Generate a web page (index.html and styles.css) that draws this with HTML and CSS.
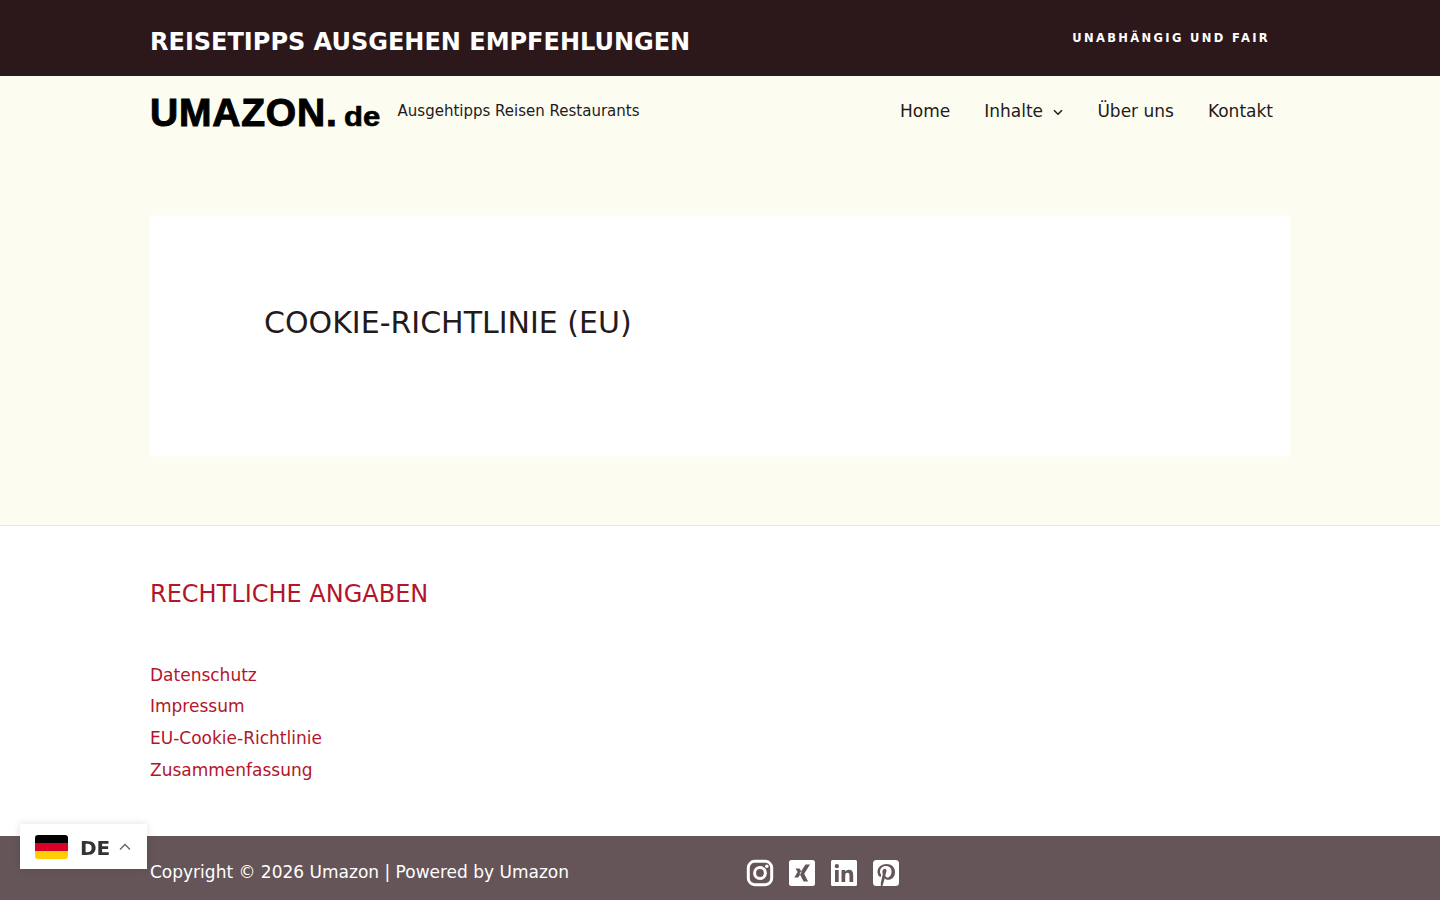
FILE: index.html
```html
<!DOCTYPE html>
<html lang="de">
<head>
    <meta charset="UTF-8">
    <meta name="viewport" content="width=device-width, initial-scale=1.0">
    <title>Cookie-Richtlinie (EU) - Umazon</title>
    <link rel="stylesheet" href="styles.css">
</head>
<body>
    <div class="topbar">
        <div class="container topbar-inner">
            <div class="topbar-title">REISETIPPS AUSGEHEN EMPFEHLUNGEN</div>
            <div class="topbar-note">UNABHÄNGIG UND FAIR</div>
        </div>
    </div>

    <div class="main-area">
        <header class="container nav">
            <div class="brand">
                <a class="logo" href="#">UMAZON.<span>de</span></a>
                <span class="tagline">Ausgehtipps Reisen Restaurants</span>
            </div>
            <nav class="menu">
                <a href="#">Home</a>
                <a href="#">Inhalte
                    <svg class="menu-arrow" viewBox="0 0 12 12" width="12" height="12"><path d="M2 4.2 6 8.2 10 4.2" fill="none" stroke="currentColor" stroke-width="1.5"/></svg>
                </a>
                <a href="#">Über uns</a>
                <a href="#">Kontakt</a>
            </nav>
        </header>

        <div class="container">
            <div class="card">
                <h1>COOKIE-RICHTLINIE (EU)</h1>
            </div>
        </div>
    </div>

    <div class="footer-widgets">
        <div class="container">
            <h2>RECHTLICHE ANGABEN</h2>
            <ul class="legal-links">
                <li><a href="#">Datenschutz</a></li>
                <li><a href="#">Impressum</a></li>
                <li><a href="#">EU-Cookie-Richtlinie</a></li>
                <li><a href="#">Zusammenfassung</a></li>
            </ul>
        </div>
    </div>

    <footer class="bottom-bar">
        <div class="container bottom-inner">
            <div class="copyright">Copyright © 2026 Umazon | Powered by Umazon</div>
            <div class="social">
                <a href="#" aria-label="Instagram">
                    <svg viewBox="0 0 28 28" width="28" height="28"><rect x="2.300" y="2.300" width="23.400" height="23.400" rx="6.500" fill="none" stroke="#fff" stroke-width="3"/><circle cx="14" cy="14" r="5.400" fill="none" stroke="#fff" stroke-width="3"/><circle cx="20.800" cy="7.200" r="1.700" fill="#fff"/></svg>
                </a>
                <a href="#" aria-label="Xing">
                    <svg viewBox="0 0 28 28" width="28" height="28"><path fill="#fff" fill-rule="evenodd" d="M3.500 1h21A2.500 2.500 0 0 1 27 3.500v21a2.500 2.500 0 0 1-2.500 2.500h-21A2.500 2.500 0 0 1 1 24.500v-21A2.500 2.500 0 0 1 3.500 1ZM17.500 5.500h4.500l-5.800 9.200 3.900 7.800h-4.500l-4-7.800ZM7.500 9.500h4l2.100 3.500-3.300 5.500H6.300l3.300-5.500Z"/></svg>
                </a>
                <a href="#" aria-label="LinkedIn">
                    <svg viewBox="0 0 28 28" width="28" height="28"><path fill="#fff" fill-rule="evenodd" d="M2.500 1h23A1.500 1.500 0 0 1 27 2.500v23a1.500 1.500 0 0 1-1.500 1.500h-23A1.500 1.500 0 0 1 1 25.500v-23A1.500 1.500 0 0 1 2.500 1ZM5 11v12h3.700V11ZM6.850 5A2.150 2.150 0 1 0 6.850 9.300 2.150 2.150 0 1 0 6.850 5ZM11.500 11v12h3.700v-6.200c0-1.900.7-3.100 2.300-3.100 1.500 0 2 1.100 2 3V23h3.700v-7c0-3.500-1.500-5.300-4.300-5.300-1.700 0-3 .8-3.700 2V11Z"/></svg>
                </a>
                <a href="#" aria-label="Pinterest">
                    <svg viewBox="0 0 28 28" width="28" height="28"><path fill="#fff" fill-rule="evenodd" d="M4.500 1h19A3.500 3.500 0 0 1 27 4.500v19a3.500 3.500 0 0 1-3.500 3.500h-13l2.300-7.800c.6.900 1.900 1.600 3.300 1.600 4 0 6.900-3.400 6.900-7.900C23 8.500 19.500 5 14.500 5 8.700 5 5.500 8.800 5.500 12.900c0 2 1 4.300 2.700 5 .3.100.4.100.5-.2l.4-1.700c0-.2 0-.3-.1-.5-.6-.7-1-1.700-1-2.700 0-3 2.300-5.700 6-5.700 3.300 0 5.500 2.200 5.500 5.300 0 3.500-1.700 6-4.100 6-1.300 0-2.300-1.100-2-2.400.4-1.600 1.100-3.300 1.100-4.400 0-1-.5-1.900-1.700-1.900-1.300 0-2.400 1.400-2.400 3.200 0 1.200.4 2 .4 2L9 23c-.3 1.100-.2 2.800-.1 4H4.500A3.500 3.500 0 0 1 1 23.500v-19A3.500 3.500 0 0 1 4.500 1Z"/></svg>
                </a>
            </div>
        </div>
    </footer>

    <div class="lang-switch">
        <svg class="flag" viewBox="0 0 33 24" width="33" height="24"><clipPath id="flagClip"><rect width="33" height="24" rx="3"/></clipPath><g clip-path="url(#flagClip)"><rect width="33" height="8" fill="#000"/><rect y="8" width="33" height="8" fill="#d80027"/><rect y="16" width="33" height="8" fill="#ffcd05"/></g></svg>
        <span class="lang-code">DE</span>
        <svg class="lang-arrow" viewBox="0 0 12 8" width="12" height="8"><path d="M1 6.500 6 1.500 11 6.500" fill="none" stroke="#666" stroke-width="1.400"/></svg>
    </div>
</body>
</html>
```

FILE: styles.css
```css
:root {
    --dark: #2c171b;
    --cream: #fcfcf0;
    --red: #b3152a;
    --text: #231a1c;
    --footer: #655558;
}

* {
    margin: 0;
    padding: 0;
    box-sizing: border-box;
}

html, body {
    height: 900px;
    overflow: hidden;
}

body {
    background: white;
    color: var(--text);
    font-family: "DejaVu Sans", sans-serif;
}

a {
    color: inherit;
    text-decoration: none;
}

.container {
    width: 1140px;
    margin: 0 auto;
}

.topbar {
    background: var(--dark);
    color: white;
    height: 76px;
}

.topbar-inner {
    display: flex;
    justify-content: space-between;
    padding-right: 20px;
}

.topbar-title {
    font-size: 24px;
    font-weight: bold;
    line-height: 30px;
    padding-top: 27px;
}

.topbar-note {
    font-size: 11.5px;
    font-weight: bold;
    letter-spacing: 2.35px;
    line-height: 16px;
    padding-top: 30px;
}

.main-area {
    background: var(--cream);
    height: 450px;
    border-bottom: 1px solid #e6e6e2;
}

.nav {
    display: flex;
    justify-content: space-between;
    align-items: center;
    height: 70px;
    padding-right: 17px;
}

.brand {
    display: flex;
    align-items: center;
    gap: 17px;
}

.logo {
    font-family: "Liberation Sans", Arial, sans-serif;
    font-weight: bold;
    font-size: 39px;
    line-height: 40px;
    letter-spacing: 0.8px;
    color: #000;
    margin-top: 7px;
    -webkit-text-stroke: 1px #000;
}

.logo span {
    display: inline-block;
    width: 37px;
    margin-left: 6px;
    font-size: 27px;
    letter-spacing: 0;
    -webkit-text-stroke: 0.6px #000;
    transform: scaleX(1.15);
    transform-origin: left;
}

.tagline {
    font-size: 15px;
}

.menu {
    display: flex;
    align-items: center;
    gap: 34px;
    font-size: 17px;
}

.menu-arrow {
    margin-left: 4px;
    margin-right: -1px;
    vertical-align: -1px;
}

.card {
    background: white;
    height: 240px;
    margin-top: 70px;
    padding: 89px 114px 0;
    box-shadow: 0 0 8px rgba(255,255,255,0.8);
}

h1 {
    font-size: 30px;
    font-weight: normal;
    line-height: 36px;
}

.footer-widgets {
    height: 310px;
    padding-top: 53px;
}

h2 {
    color: var(--red);
    font-size: 24px;
    font-weight: normal;
    line-height: 30px;
}

.legal-links {
    list-style: none;
    margin-top: 50.7px;
    color: var(--red);
    font-size: 17px;
}

.legal-links li {
    line-height: 31.7px;
}

.bottom-bar {
    background: var(--footer);
    color: white;
    height: 64px;
}

.bottom-inner {
    display: flex;
    align-items: center;
    height: 72px;
}

.copyright {
    font-size: 17px;
    width: 596px;
}

.social {
    display: flex;
    gap: 14px;
    margin-top: 2px;
}

.social a {
    display: block;
    height: 28px;
}

.lang-switch {
    position: fixed;
    left: 20px;
    bottom: 31px;
    width: 127px;
    height: 45px;
    background: white;
    display: flex;
    align-items: center;
    padding-left: 15px;
    box-shadow: 0 0 8px rgba(0,0,0,0.12);
}

.lang-code {
    font-size: 20px;
    font-weight: bold;
    color: #333;
    margin-left: 12px;
    margin-top: 2px;
}

.lang-arrow {
    margin-left: 9px;
}
```
